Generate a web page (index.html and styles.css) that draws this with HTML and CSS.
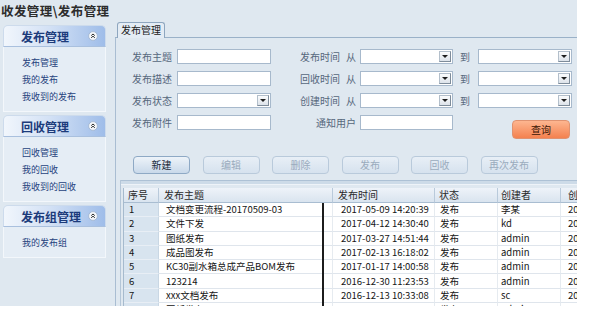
FILE: index.html
```html
<!DOCTYPE html>
<html lang="zh">
<head>
<meta charset="utf-8">
<title>收发管理</title>
<link rel="stylesheet" href="styles.css">
</head>
<body>
<div class="app">
  <div class="title">收发管理\发布管理</div>
  <div class="main">
    <aside class="sidebar">
      <section class="panel">
        <div class="panel-head"><span>发布管理</span>
          <svg class="collapse" viewBox="0 0 10 10" width="10" height="10"><circle cx="5" cy="5" r="4.4" fill="#f5f8fc" stroke="#9fb3cc" stroke-width="0.8"/><path d="M3.2 4.6 L5 3 L6.8 4.6 M3.2 6.8 L5 5.2 L6.8 6.8" fill="none" stroke="#2a2a2a" stroke-width="1"/></svg>
        </div>
        <ul class="panel-body">
          <li>发布管理</li>
          <li>我的发布</li>
          <li>我收到的发布</li>
        </ul>
      </section>
      <section class="panel">
        <div class="panel-head"><span>回收管理</span>
          <svg class="collapse" viewBox="0 0 10 10" width="10" height="10"><circle cx="5" cy="5" r="4.4" fill="#f5f8fc" stroke="#9fb3cc" stroke-width="0.8"/><path d="M3.2 4.6 L5 3 L6.8 4.6 M3.2 6.8 L5 5.2 L6.8 6.8" fill="none" stroke="#2a2a2a" stroke-width="1"/></svg>
        </div>
        <ul class="panel-body">
          <li>回收管理</li>
          <li>我的回收</li>
          <li>我收到的回收</li>
        </ul>
      </section>
      <section class="panel">
        <div class="panel-head"><span>发布组管理</span>
          <svg class="collapse" viewBox="0 0 10 10" width="10" height="10"><circle cx="5" cy="5" r="4.4" fill="#f5f8fc" stroke="#9fb3cc" stroke-width="0.8"/><path d="M3.2 4.6 L5 3 L6.8 4.6 M3.2 6.8 L5 5.2 L6.8 6.8" fill="none" stroke="#2a2a2a" stroke-width="1"/></svg>
        </div>
        <ul class="panel-body">
          <li>我的发布组</li>
        </ul>
      </section>
    </aside>

    <div class="content">
      <div class="tabs"><div class="tab">发布管理</div></div>
      <div class="tab-body">
        <div class="form">
          <div class="lbl">发布主题</div>
          <div class="input"></div>
          <div class="lbl lbl2">发布时间<span class="from">从</span></div>
          <div class="select"><span class="arrow"></span></div>
          <div class="lbl dao">到</div>
          <div class="select"><span class="arrow"></span></div>

          <div class="lbl">发布描述</div>
          <div class="input"></div>
          <div class="lbl lbl2">回收时间<span class="from">从</span></div>
          <div class="select"><span class="arrow"></span></div>
          <div class="lbl dao">到</div>
          <div class="select"><span class="arrow"></span></div>

          <div class="lbl">发布状态</div>
          <div class="select"><span class="arrow"></span></div>
          <div class="lbl lbl2">创建时间<span class="from">从</span></div>
          <div class="select"><span class="arrow"></span></div>
          <div class="lbl dao">到</div>
          <div class="select"><span class="arrow"></span></div>

          <div class="lbl">发布附件</div>
          <div class="input"></div>
          <div class="lbl lbl2">通知用户</div>
          <div class="input"></div>
          <div class="query">查询</div>
        </div>

        <div class="buttons">
          <div class="btn">新建</div>
          <div class="btn disabled">编辑</div>
          <div class="btn disabled">删除</div>
          <div class="btn disabled">发布</div>
          <div class="btn disabled">回收</div>
          <div class="btn disabled">再次发布</div>
        </div>

        <div class="grid">
          <div class="grid-bar"></div>
          <div class="table-wrap">
            <table class="table">
              <colgroup>
                <col class="c1"><col class="c2"><col class="c3"><col class="c4"><col class="c5"><col class="c6">
              </colgroup>
              <thead>
                <tr><th>序号</th><th>发布主题</th><th>发布时间</th><th>状态</th><th>创建者</th><th>创建时间</th></tr>
              </thead>
              <tbody>
                <tr><td>1</td><td>文档变更流程-20170509-03</td><td>2017-05-09 14:20:39</td><td>发布</td><td>李某</td><td>2017-05-09</td></tr>
                <tr><td>2</td><td>文件下发</td><td>2017-04-12 14:30:40</td><td>发布</td><td>kd</td><td>2017-04-12</td></tr>
                <tr><td>3</td><td>图纸发布</td><td>2017-03-27 14:51:44</td><td>发布</td><td>admin</td><td>2017-03-27</td></tr>
                <tr><td>4</td><td>成品图发布</td><td>2017-02-13 16:18:02</td><td>发布</td><td>admin</td><td>2017-02-13</td></tr>
                <tr><td>5</td><td>KC30副水箱总成产品BOM发布</td><td>2017-01-17 14:00:58</td><td>发布</td><td>admin</td><td>2017-01-17</td></tr>
                <tr><td>6</td><td>123214</td><td>2016-12-30 11:23:53</td><td>发布</td><td>admin</td><td>2016-12-30</td></tr>
                <tr><td>7</td><td>xxx文档发布</td><td>2016-12-13 10:33:08</td><td>发布</td><td>sc</td><td>2016-12-13</td></tr>
                <tr><td>8</td><td>图纸发布</td><td>2016-12-13 10:32:48</td><td>发布</td><td>admin</td><td>2016-12-13</td></tr>
              </tbody>
            </table>
          </div>
          <div class="drag-line"></div>
        </div>
      </div>
    </div>
  </div>
</div>
</body>
</html>
```

FILE: styles.css
```css
* { box-sizing: border-box; }
html, body { margin: 0; padding: 0; background: #ffffff; }
body { font-family: "Noto Sans CJK SC", "Noto Sans", sans-serif; color: #222; }

.app {
  width: 577px;
  height: 306px;
  background: #dfe8f0;
  overflow: hidden;
}

.title {
  height: 22px;
  line-height: 22px;
  padding-left: 1px;
  font-size: 12.5px;
  font-weight: bold;
  letter-spacing: 0.4px;
  color: #2c2c2c;
}

.main { display: flex; height: 284px; }

/* ---------- sidebar ---------- */
.sidebar { flex: none; width: 103px; margin-left: 3px; padding-top: 3px; }
.panel { margin-bottom: 3px; }
.panel-head {
  height: 22px;
  display: flex;
  align-items: center;
  justify-content: space-between;
  padding: 0 7px 0 17px;
  border: 1px solid #cddbec;
  border-bottom-color: #a9c0de;
  border-radius: 5px 5px 0 0;
  background: linear-gradient(to right, #f1f6fc 0%, #d3e1f5 45%, #9fbde9 100%);
  font-size: 12px;
  font-weight: bold;
  color: #1c3b7b;
}
.collapse { display: block; }
.panel-body {
  list-style: none;
  margin: 0;
  padding: 7px 0 6px 18px;
  border: 1px solid #f3f7fb;
  border-top: 0;
  background: #e5edf5;
}
.panel-body li { font-size: 9px; line-height: 17px; color: #26437d; }

/* ---------- content ---------- */
.content { flex: 1; min-width: 0; margin-left: 9px; display: flex; flex-direction: column; }
.tabs {
  height: 16px;
  display: flex;
  align-items: flex-end;
  padding-left: 2px;
  border-bottom: 1px solid #9ab1c8;
}
.tab {
  height: 16px;
  margin-bottom: -1px;
  padding: 0 3px;
  border: 1px solid #8ea6bf;
  border-bottom: 0;
  border-radius: 3px 3px 0 0;
  background: #e4ecf4;
  font-size: 10px;
  line-height: 13px;
  color: #1a1a1a;
}
.tab-body {
  flex: 1;
  min-height: 0;
  display: flex;
  flex-direction: column;
  border-left: 1px solid #a9bdd2;
  padding-top: 11px;
}

/* form */
.form {
  display: grid;
  grid-template-columns: 61px 94px 89px 93px 25px 94px;
  grid-auto-rows: 15px;
  row-gap: 7px;
}
.lbl {
  font-size: 10px;
  line-height: 15px;
  color: #56677c;
  text-align: right;
  padding-right: 5px;
  white-space: nowrap;
}
.lbl2 { padding-right: 4px; }
.from { margin-left: 6px; }
.dao { text-align: left; padding-left: 7px; padding-right: 0; }
.input {
  height: 15px;
  background: #fff;
  border: 1px solid #a7b9cc;
}
.select {
  height: 15px;
  background: #fff;
  border: 1px solid #a7b9cc;
  padding: 1px;
  display: flex;
  justify-content: flex-end;
}
.arrow {
  width: 12px;
  height: 100%;
  display: flex;
  align-items: center;
  justify-content: center;
  background: linear-gradient(#fbfcfd, #dde3ea);
  border: 1px solid #b3bfcb;
  border-right-color: #7e8c9a;
  border-bottom-color: #7e8c9a;
}
.arrow::after {
  content: "";
  border-left: 3px solid transparent;
  border-right: 3px solid transparent;
  border-top: 3px solid #1e1e1e;
}
.query {
  grid-column: 5 / 7;
  justify-self: end;
  align-self: start;
  width: 58px;
  height: 19px;
  margin: 5px 2px -9px 0;
  border: 1px solid #df9270;
  border-radius: 4px;
  background: linear-gradient(#fdb690, #f4814f);
  font-size: 10px;
  line-height: 17px;
  text-align: center;
  color: #3a1606;
}

/* buttons */
.buttons {
  display: flex;
  gap: 12.5px;
  margin-top: 26px;
  padding-left: 17px;
}
.btn {
  width: 57px;
  height: 18px;
  border: 1px solid #8ea9c5;
  border-radius: 4px;
  background: linear-gradient(#edf3f9, #c9d9ea);
  font-size: 10px;
  line-height: 16px;
  text-align: center;
  color: #1b2a3a;
}
.btn.disabled {
  border-color: #b9cadb;
  background: linear-gradient(#e8eff6, #d6e2ee);
  color: #9aabbd;
}

/* grid */
.grid {
  position: relative;
  flex: 1;
  min-height: 0;
  margin: 6px 0 0 4px;
  border-left: 1px solid #b4c6d8;
  overflow: hidden;
}
.grid-bar {
  height: 5px;
  border-top: 1px solid #adc1d5;
  border-bottom: 1px solid #eef3f8;
  background: #cddbe8;
}
.table-wrap { padding: 3px 0 0 2px; }
.table {
  table-layout: fixed;
  width: 517px;
  border-collapse: separate;
  border-spacing: 0;
  border-left: 1px solid #a6bacd;
}
col.c1 { width: 35px; }
col.c2 { width: 174px; }
col.c3 { width: 102px; }
col.c4 { width: 63px; }
col.c5 { width: 63px; }
col.c6 { width: 80px; }

.table th {
  height: 15px;
  padding: 0 0 0 4px;
  font-size: 10px;
  font-weight: normal;
  line-height: 14px;
  text-align: left;
  color: #2a2a2a;
  white-space: nowrap;
  overflow: hidden;
  background: linear-gradient(#eef3f9, #d9e4ef);
  border-right: 1px solid #b9cadb;
  border-bottom: 1px solid #a9bdd1;
}
.table th:nth-child(2), .table th:nth-child(3) { padding-left: 5px; }
.table th:nth-child(6) { padding-left: 7px; }
.table th:nth-child(5) { padding-left: 3px; }

.table tbody tr { height: 14.3px; }
.table td {
  padding: 0 0 0 5px;
  font-size: 9.5px;
  line-height: 13px;
  color: #151515;
  white-space: nowrap;
  overflow: hidden;
  background: #fff;
  border-bottom: 1px solid #dfe5ec;
  border-right: 1px solid #e6ebf0;
}
.table td:nth-child(1) { background: #d8e4ef; border-bottom-color: #e8eef5; border-right-color: #c9d7e4; }
.table td:nth-child(2) { padding-left: 7px; }
.table td:nth-child(3) { padding-left: 8px; }
.table td:nth-child(5) { padding-left: 3px; }
.table td:nth-child(6) { padding-left: 7px; }

.drag-line {
  position: absolute;
  left: 201px;
  top: 23px;
  bottom: 0;
  width: 2px;
  background: #1c1c1c;
}
```
